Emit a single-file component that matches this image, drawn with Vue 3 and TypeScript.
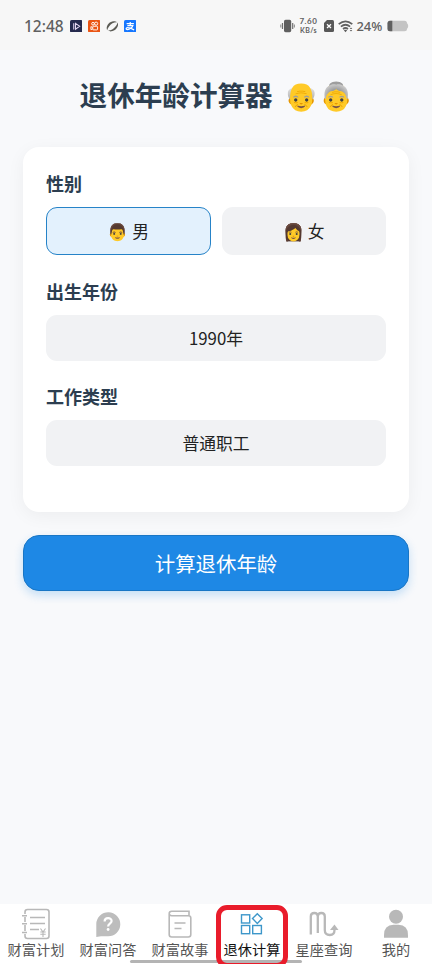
<script setup lang="ts">
import { ref } from 'vue'

type Gender = 'male' | 'female'

const gender = ref<Gender>('male')
const options: { id: Gender; icon: string; label: string }[] = [
  { id: 'male', icon: '👨', label: '男' },
  { id: 'female', icon: '👩', label: '女' },
]
const fields = [
  { label: '出生年份', value: '1990年' },
  { label: '工作类型', value: '普通职工' },
]
const tabs = [
  { id: 'plan', label: '财富计划' },
  { id: 'qa', label: '财富问答' },
  { id: 'story', label: '财富故事' },
  { id: 'retire', label: '退休计算' },
  { id: 'zodiac', label: '星座查询' },
  { id: 'mine', label: '我的' },
]
const active = ref('retire')
</script>

<template>
  <div class="screen">
    <header class="status">
      <span class="time">12:48</span>
      <svg class="app-icon" viewBox="0 0 12 12"><rect width="12" height="12" rx="1.5" fill="#262a4e" /><path d="M3.600 3v6.200M5.300 3.200 9.300 6 5.300 8.800Z" fill="none" stroke="#e5d7f2" stroke-width="1" /></svg>
      <svg class="app-icon" viewBox="0 0 12 12"><rect width="12" height="12" rx="1.5" fill="#ea5514" /><g fill="none" stroke="#fff" stroke-width=".9"><circle cx="4.800" cy="3.600" r="1.300" /><circle cx="7.800" cy="3.500" r="1.500" /><rect x="4.600" y="6" width="4.600" height="3.500" rx=".8" /><path d="M4.600 7 2.800 6.400v2.800l1.800-.6" /></g></svg>
      <svg class="app-icon" viewBox="0 0 12 12"><path d="M1.200 9.800C-.8 6.300 3 1.200 7.200 1.100c1.500 0 2.700.3 3.300 1C7.500 2 4.800 3.400 3.300 5.700 2 7.300 1.500 8.500 1.200 9.800ZM11 2.300c2 3-1.400 8-5.700 8.600-1.300.2-2.500-.1-3-.8C5 10.100 7.200 8.800 8.900 6.500 10.100 5 10.800 3.800 11 2.300Z" fill="#5b5b55" /></svg>
      <svg class="app-icon" viewBox="0 0 12 12"><rect width="12" height="12" rx="1.500" fill="#1677ff" /><path d="M2.500 3.500h7M6 2v3.300M3.200 5.300h5.300C7.800 7.300 5.500 9.300 3.300 9.300c-1.700 0-1.600-2 .1-2 2 0 4.300 1.100 6.300 2.200" fill="none" stroke="#fff" stroke-width="1.200" /></svg>

      <div class="status-right">
        <svg class="vibrate" viewBox="0 0 15 14"><rect x="4" y=".8" width="7.200" height="12.400" rx="1.600" fill="#606060" /><path d="M2.500 4v6M12.700 4v6" stroke="#707070" stroke-width="1.200" /><path d="M.8 5.500v3M14.400 5.500v3" stroke="#909090" stroke-width="1.100" /></svg>
        <span class="speed"><b class="rate">7.60</b><b class="unit">KB/s</b></span>
        <svg class="sim" viewBox="0 0 10 12"><path d="M3 0h5.500Q10 0 10 1.500v9Q10 12 8.500 12h-7Q0 12 0 10.500V3Z" fill="#585858" /><path d="m3 4.200 4 3.700M7 4.200 3 7.900" stroke="#fff" stroke-width="1.300" /></svg>
        <svg class="wifi" viewBox="0 0 16 13"><g fill="none" stroke="#606060" stroke-width="1.700"><path d="M.7 4.200q6.800-5.800 13.600 0M2.900 6.700q4.600-3.900 9.200 0M5 9q2.500-2 5 0" /></g><path d="m5.800 10.300 1.700 2 1.700-2q-1.700-1.200-3.400 0Z" fill="#606060" /><path d="m11.700 9 1.300-1.500L14.300 9ZM11.700 10l1.300 1.500 1.300-1.500Z" fill="#606060" /></svg>
        <span class="percent">24%</span>
        <svg class="battery" viewBox="0 0 22 12"><rect x=".5" y=".8" width="19.500" height="10.400" rx="2.500" fill="#c4c4c4" /><path d="M19.500 2.500q3.500 3.500 0 7" fill="#c4c4c4" /><path d="M5.300.8H3Q.5.800.5 3.300v5.400Q.5 11.200 3 11.200h2.300Z" fill="#606060" /></svg>
      </div>
    </header>

    <main class="content">
      <h1 class="title"><span>退休年龄计算器</span><span>👴👵</span></h1>
      <section class="card">
        <h2 class="label">性别</h2>
        <div class="options">
          <button v-for="o in options" :key="o.id" class="option" :class="{ selected: gender === o.id }" @click="gender = o.id">
            <span>{{ o.icon }} {{ o.label }}</span>
          </button>
        </div>
        <template v-for="f in fields" :key="f.label">
          <h2 class="label">{{ f.label }}</h2>
          <div class="picker">{{ f.value }}</div>
        </template>
      </section>
      <button class="submit">计算退休年龄</button>
    </main>

    <nav class="tabs">
      <button v-for="t in tabs" :key="t.id" class="tab" :class="{ active: active === t.id }" @click="active = t.id">
        <svg class="tab-icon" viewBox="0 0 32 32" fill="none" stroke="#b8b8b8" stroke-width="1.600">
          <template v-if="t.id === 'plan'">
            <path d="M5 6V4q0-2.500 2.500-2.500h19Q29 1.500 29 4v24q0 2.500-2.500 2.500h-19Q5 30.500 5 28v-2M5 9v5M5 17v6" />
            <path d="M2 7.700h5M2 15.700h5M2 24.500h5M10 9.500h15M10 15.500h15M10 21.500h9" />
            <path d="m20.500 20.500 2.500 3.500 2.500-3.500M20.300 24h5.400M20.300 26.200h5.400M23 24v5" stroke-width="1.100" />
          </template>
          <template v-else-if="t.id === 'qa'">
            <path d="M4.300 29V16A12 12 0 1 1 16 28.300H9Z" fill="#bdbdbd" stroke="none" />
            <path d="M12.600 13.400c0-4.400 7-4.400 7-.4 0 2.700-3.500 2.600-3.500 5.400" stroke="#fff" stroke-width="2.200" /><circle cx="16.100" cy="21.500" r="1.400" fill="#fff" stroke="none" />
          </template>
          <template v-else-if="t.id === 'story'">
            <path d="M5.200 6V26.500q0 2.500 2.500 2.500h16.600q2.500 0 2.500-2.500V10Q26.800 7.800 24.300 7.800H7.700q-2.500 0-2.500-2.200 0-2.300 2.500-2.300h17.300v4.500M10.500 15h11M10.500 20.500h7" />
          </template>
          <template v-else-if="t.id === 'retire'">
            <g stroke="#3d97ca" stroke-width="1.400"><rect x="5.500" y="6.800" width="8.200" height="8.200" /><rect x="5.500" y="17.500" width="8.200" height="8.200" /><rect x="16.700" y="17.500" width="8.700" height="8.200" /><path d="m21.300 5.800 4.800 4.800-4.800 4.800-4.800-4.800Z" /></g>
          </template>
          <template v-else-if="t.id === 'zodiac'">
            <path d="M2.800 26.500V8.500Q2.800 5 6.300 5T9.800 8.500V25M9.800 8.500Q9.800 5 13.300 5t3.500 3.500V22q0 5 5 5 4.700 0 4.700-5v-1.500" stroke-width="2.300" /><path d="m22 22 4.500-5.500L30.500 22Z" fill="#b8b8b8" stroke="none" />
          </template>
          <template v-else>
            <g fill="#b8b8b8" stroke="none"><circle cx="16" cy="8.800" r="7" /><path d="M4 29.800v-2.500q0-10.500 9.500-10.500h5q9.500 0 9.500 10.500v2.500Z" /></g>
          </template>
        </svg>
        <span class="tab-label">{{ t.label }}</span>
      </button>
      <div class="home-bar"></div>
      <div class="highlight"></div>
    </nav>
  </div>
</template>

<style>
body { margin: 0; }
</style>

<style scoped>
.screen { width: 432px; height: 964px; display: flex; flex-direction: column; overflow: hidden; background: #f8f9fb; color: #222; font-family: "Noto Sans CJK SC", "Noto Color Emoji", sans-serif; }
button { appearance: none; border: 0; padding: 0; margin: 0; font: inherit; color: inherit; }
.status { box-sizing: border-box; height: 50px; flex: none; display: flex; align-items: center; padding: 2px 24px 0; background: #f7f7f7; color: #606060; }
.time { width: 45.500px; font: 500 15.500px/20px "Noto Sans", sans-serif; letter-spacing: 0; }
.app-icon { width: 12.500px; height: 12.500px; margin-right: 5.500px; flex: none; }
.status-right { display: flex; align-items: center; margin-left: auto; }
.vibrate { width: 15px; height: 14px; }
.speed { width: 20px; margin-left: 4px; display: flex; flex-direction: column; align-items: center; font-family: Lato, sans-serif; }
.speed b { white-space: nowrap; }
.rate { font-size: 8px; line-height: 9px; letter-spacing: .6px; }
.unit { font-size: 7px; line-height: 9px; letter-spacing: .4px; }
.sim { width: 10px; height: 12px; margin-left: 5px; }
.wifi { width: 16px; height: 13px; margin-left: 4px; }
.percent { width: 28px; margin-left: 3px; font: 500 13px/18px "Noto Sans", sans-serif; letter-spacing: -.1px; }
.battery { width: 22px; height: 12px; margin-left: 2px; margin-right: -.5px; }
.content { flex: 1; padding: 18px 23px 0; display: flex; flex-direction: column; }
.title { margin: 0 0 27px; padding-left: 1px; height: 52px; display: flex; justify-content: center; align-items: center; gap: 12px; color: #2c3e50; font-size: 27.600px; line-height: 52px; font-weight: 700; white-space: nowrap; }
.card { box-sizing: border-box; height: 365px; padding: 23px; border-radius: 16px; background: #fff; box-shadow: 0 4px 18px rgba(0, 0, 0, .05); }
.label { margin: 0 0 10px; color: #2c3e50; font-size: 18px; line-height: 27px; font-weight: 700; }
.options { display: grid; grid-template-columns: 1fr 1fr; gap: 11px; margin-bottom: 23px; }
.option { box-sizing: border-box; height: 48px; border-radius: 11px; background: #f1f2f4; font-size: 16.800px; line-height: 46px; display: flex; justify-content: center; align-items: center; }
.option.selected { background: #e3f1fd; border: 1.500px solid #2683c8; }
.picker { height: 46px; margin-bottom: 22px; border-radius: 11px; background: #f1f2f4; text-align: center; font-size: 16.800px; line-height: 46px; }
.submit { box-sizing: border-box; height: 56px; margin-top: 23px; border: 1px solid #1976c5; border-radius: 16px; background: #1e88e5; box-shadow: 0 4px 10px rgba(30, 136, 229, .24); color: #fff; font-size: 20.400px; line-height: 54px; }
.tabs { position: relative; height: 60px; flex: none; display: grid; grid-template-columns: repeat(6, 1fr); background: #fff; }
.tab { display: flex; flex-direction: column; align-items: center; background: transparent; padding-top: 4px; height: 60px; }
.tab-icon { width: 32px; height: 32px; flex: none; }
.tab-label { color: #555; font-size: 14.200px; line-height: 20px; margin-top: -1px; white-space: nowrap; }
.active .tab-label { color: #111; }
.home-bar { position: absolute; left: 130px; bottom: 1px; width: 172px; height: 3px; border-radius: 2px; background: #b4b4b4; }
.highlight { position: absolute; box-sizing: border-box; left: 216px; top: 1px; width: 72px; height: 63px; border: 5px solid #e91c2b; border-radius: 11px; pointer-events: none; }
</style>
